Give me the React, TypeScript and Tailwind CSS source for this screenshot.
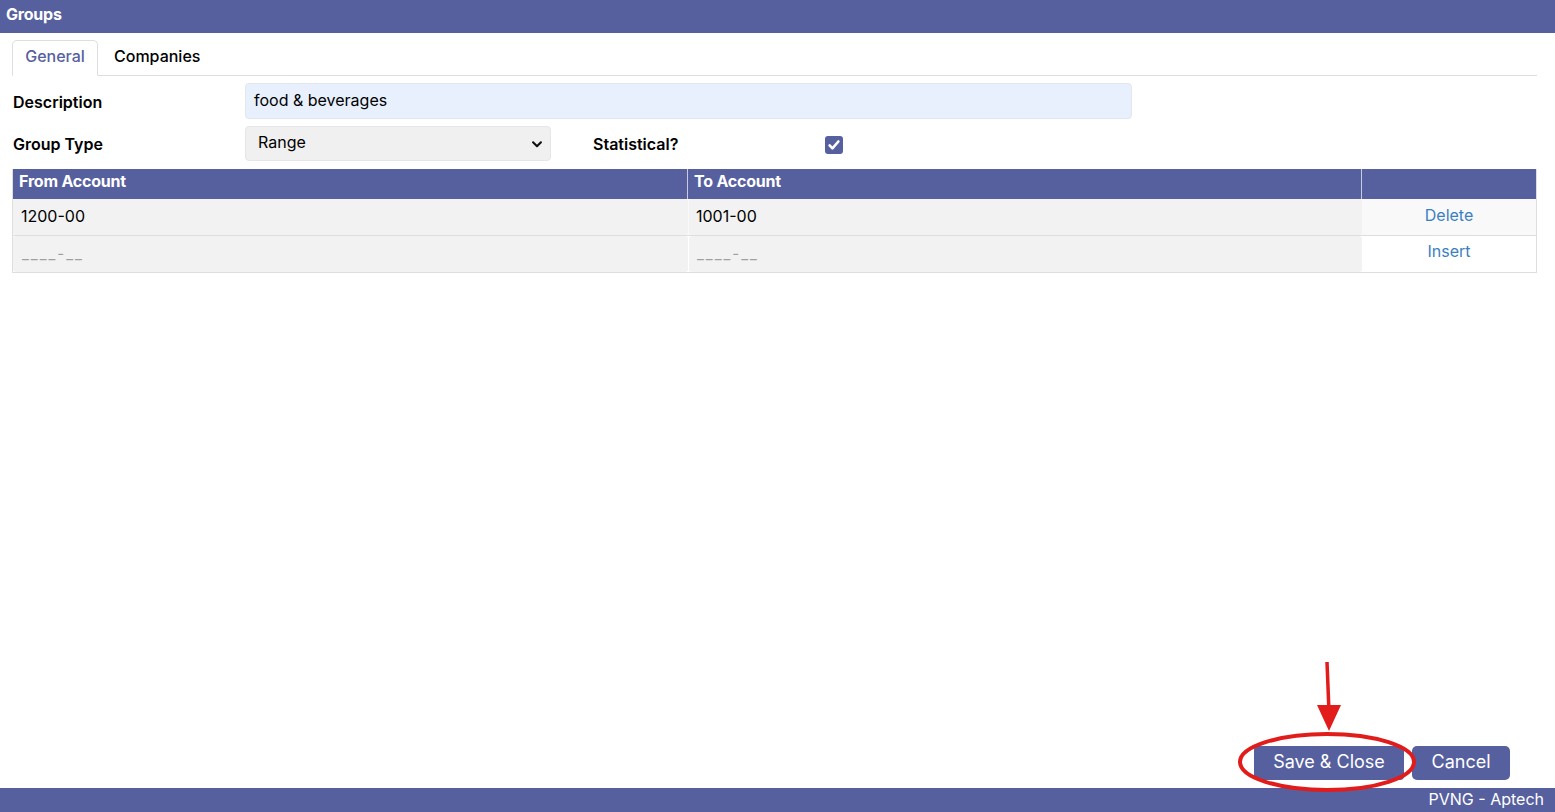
import React from "react";

const font = { fontFamily: "Inter, 'Noto Sans', sans-serif" };

export default function App() {
  return (
    <div className="relative flex h-[812px] w-full flex-col bg-white text-[16px] text-black" style={font}>
      {/* top bar */}
      <div className="flex h-[33px] items-center bg-[#57609e] px-[6px] pb-[6px] text-[16px] font-bold tracking-[-0.2px] text-white">
        Groups
      </div>

      <div className="flex flex-1 flex-col px-[12px] pt-[7px]">
        {/* tabs */}
        <div className="mr-[6px] flex h-[36px] items-end border-b border-[#dedede]">
          <div className="-mb-px flex h-[36px] w-[86px] items-center justify-center rounded-t-[5px] border border-b-white border-[#dedede] bg-white pb-[4px] text-[16px] font-medium text-[#57609e]">
            General
          </div>
          <div className="flex h-[36px] items-center pb-[2px] pl-[16px] text-[16px] font-medium">Companies</div>
        </div>

        {/* description */}
        <div className="mt-[7px] flex h-[36px] items-center">
          <div className="w-[233px] pl-px pt-[1px] text-[16px] font-semibold">Description</div>
          <div className="flex h-[36px] w-[887px] items-center rounded-[4px] border border-[#e1e6ef] bg-[#e8f0fe] px-[8px] pb-[3px] text-[16px] font-normal">
            food &amp; beverages
          </div>
        </div>

        {/* group type */}
        <div className="mt-[7px] flex h-[35px] items-center">
          <div className="w-[233px] pl-px pt-[1px] text-[16px] font-semibold">Group Type</div>
          <div className="flex h-[35px] w-[306px] items-center justify-between rounded-[4px] border border-[#e6e6e6] bg-[#f0f0f0] pl-[12px] pr-[6px] pb-[3px] text-[16px] font-normal">
            <span>Range</span>
            <svg className="mt-[3px]" width="14" height="14" viewBox="0 0 16 16" fill="none" stroke="#111" strokeWidth="2.4" strokeLinecap="round" strokeLinejoin="round">
              <path d="M3.5 6l4.5 4.5L12.5 6" />
            </svg>
          </div>
          <div className="ml-[42px] w-[232px] pt-[1px] text-[16px] font-semibold">Statistical?</div>
          <div className="mt-[3px] flex h-[18px] w-[18px] items-center justify-center rounded-[3px] bg-[#57609e]">
            <svg width="14" height="14" viewBox="0 0 16 16" fill="none" stroke="white" strokeWidth="3" strokeLinecap="round" strokeLinejoin="round">
              <path d="M3 8.5l3.2 3.4L13 4" />
            </svg>
          </div>
        </div>

        {/* table */}
        <div className="mr-[6px] mt-[8px] border-l border-r border-b border-[#dedede]">
          <div className="grid h-[30px] grid-cols-[675px_674px_1fr] bg-[#57609e] text-[16px] font-bold tracking-[-0.2px] text-white">
            <div className="flex items-center border-r border-[#c9cce0] px-[6px] pb-[6px]">From Account</div>
            <div className="flex items-center border-r border-[#c9cce0] px-[6px] pb-[6px]">To Account</div>
            <div />
          </div>
          <div className="grid h-[37px] grid-cols-[675px_674px_1fr] border-b border-[#dedede] bg-[#f9f9f9]">
            <div className="flex items-center rounded-[3px] bg-[#f2f2f2] px-[8px] pb-[3px] text-[16px] font-normal">1200-00</div>
            <div className="ml-px flex items-center rounded-[3px] bg-[#f2f2f2] px-[7px] pb-[3px] text-[16px] font-normal">1001-00</div>
            <div className="flex items-center justify-center pb-[5px] text-[16px] text-[#3a7fc1]">Delete</div>
          </div>
          <div className="grid h-[36px] grid-cols-[675px_674px_1fr] bg-white">
            <div className="flex items-center rounded-[3px] bg-[#f2f2f2] px-[9px] text-[15px] tracking-[2px] text-[#a0a0a0]">____-__</div>
            <div className="ml-px flex items-center rounded-[3px] bg-[#f2f2f2] px-[8px] text-[15px] tracking-[2px] text-[#a0a0a0]">____-__</div>
            <div className="flex items-center justify-center pb-[7px] text-[16px] text-[#3a7fc1]">Insert</div>
          </div>
        </div>

        <div className="flex-1" />

        {/* buttons */}
        <div className="mb-[8px] mr-[33px] flex justify-end gap-[8px]">
          <button className="flex h-[34px] w-[150px] items-center justify-center rounded-[4px] bg-[#57609e] pb-[4px] text-[18px] font-normal text-white">
            Save &amp; Close
          </button>
          <button className="flex h-[34px] w-[98px] items-center justify-center rounded-[5px] bg-[#57609e] pb-[4px] text-[18px] font-normal text-white">
            Cancel
          </button>
        </div>
      </div>

      {/* footer */}
      <div className="flex h-[24px] items-center justify-end bg-[#57609e] pb-[2px] pr-[11px] text-[16px] font-normal text-white">
        PVNG - Aptech
      </div>

      {/* red annotation overlay */}
      <svg className="pointer-events-none absolute left-0 top-0" width="1555" height="812" viewBox="0 0 1555 812">
        <ellipse cx="1327" cy="762" rx="87" ry="28" fill="none" stroke="#e21b1b" strokeWidth="4" />
        <line x1="1327" y1="662" x2="1329" y2="712" stroke="#e21b1b" strokeWidth="3.5" />
        <polygon points="1317,705 1341,705 1329,731" fill="#e21b1b" />
      </svg>
    </div>
  );
}
